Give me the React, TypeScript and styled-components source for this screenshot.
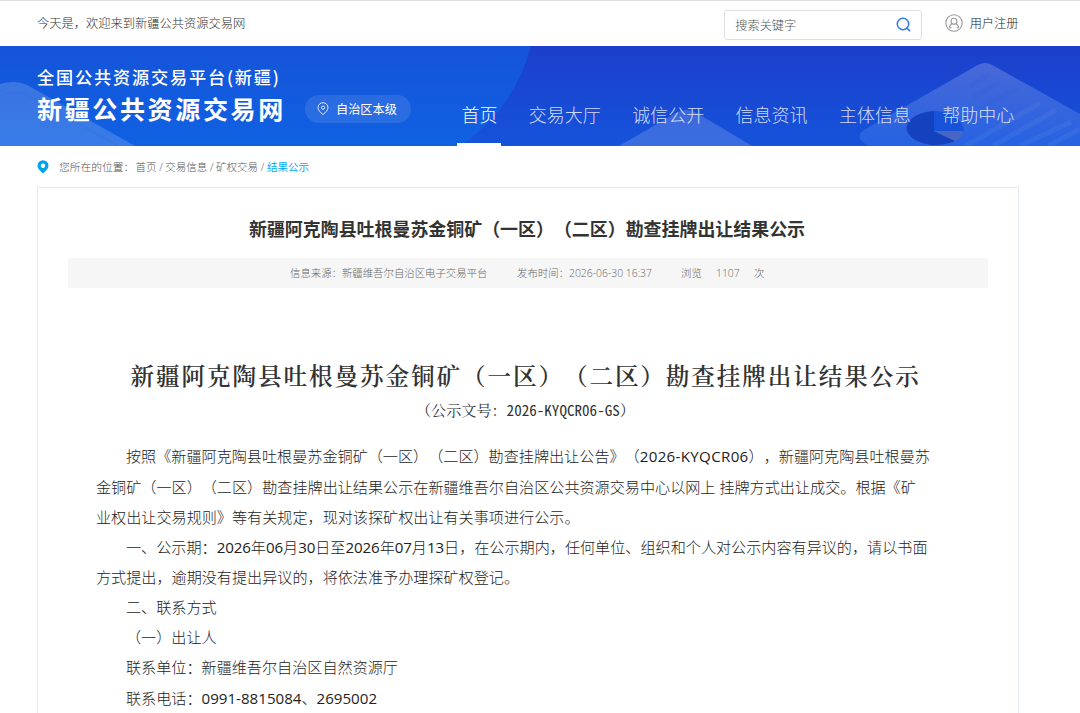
import React from "react";
import styled, { createGlobalStyle } from "styled-components";

const GlobalStyle = createGlobalStyle`
  * { box-sizing: border-box; }
  html, body { margin: 0; padding: 0; height: 713px; overflow: hidden; background: #fff; }
  body {
    font-family: "Open Sans", "Noto Sans CJK SC", sans-serif;
    color: #333;
    text-spacing-trim: space-all;
    white-space: nowrap;
  }
`;

const Page = styled.div`
  width: 1080px;
  height: 713px;
  overflow: hidden;
  display: flex;
  flex-direction: column;
`;

const Container = styled.div`
  width: 982px;
  margin-left: 37px;
  display: flex;
  align-items: center;
`;

const TopBar = styled.div`
  height: 46px;
  flex: none;
  border-top: 1px solid #e0e0e0;
  display: flex;
  align-items: center;
`;

const Greeting = styled.span`
  flex: 1;
  font-size: 12.25px;
  line-height: 18px;
  padding-top: 1px;
  font-weight: 300;
  color: #333;
`;

const SearchBox = styled.div`
  width: 198px;
  height: 30px;
  margin-top: 2px;
  border: 1px solid #dedede;
  border-radius: 3px;
  display: flex;
  align-items: center;
  justify-content: space-between;
  padding: 0 10px;
  font-size: 12.2px;
  font-weight: 300;
  color: #555;
`;

const Register = styled.a`
  display: flex;
  align-items: center;
  gap: 7px;
  margin: 0 0.6px 1px 22.4px;
  font-size: 12.2px;
  font-weight: 300;
  color: #222;
`;

const Header = styled.header`
  position: relative;
  height: 100px;
  flex: none;
  overflow: hidden;
  color: #fff;
`;

const HeaderArt = styled.svg`
  position: absolute;
  inset: 0;
`;

const HeaderRow = styled(Container)`
  position: relative;
  height: 100px;
  align-items: flex-start;
`;

const Brand = styled.div`
  width: 268px;
  padding-top: 19px;
  font-family: "Noto Sans CJK SC", sans-serif;
`;

const BrandSmall = styled.div`
  font-size: 17.2px;
  line-height: 24px;
  font-weight: 500;
  letter-spacing: 1.8px;
`;

const BrandLarge = styled.div`
  font-size: 25px;
  line-height: 38px;
  font-weight: 700;
  letter-spacing: 2.65px;
`;

const Region = styled.div`
  display: flex;
  align-items: center;
  gap: 7px;
  width: 106px;
  height: 28px;
  margin-top: 49px;
  padding-left: 12px;
  border-radius: 14px;
  background: rgba(255, 255, 255, 0.1);
  font-size: 12.2px;
`;

const Nav = styled.nav`
  display: flex;
  gap: 23.4px;
  margin-left: 46.4px;
  padding-top: 42px;
`;

const NavItem = styled.a<{ $active?: boolean }>`
  height: 58px;
  padding: 12px 4px 0;
  font-size: 18px;
  line-height: 30px;
  font-weight: 300;
  color: ${(p) => (p.$active ? "#fff" : "rgba(255,255,255,0.8)")};
  border-bottom: 3px solid ${(p) => (p.$active ? "#fff" : "transparent")};
`;

const Breadcrumb = styled(Container)`
  height: 41px;
  flex: none;
  font-size: 10.4px;
  font-weight: 300;
  color: #555;
`;

const CrumbLabel = styled.span`
  margin: 0 13.5px 0 10px;
  font-size: 10.75px;
  width: 63px;
`;

const Crumb = styled.span<{ $current?: boolean }>`
  font-size: 10.5px;
  font-weight: ${(p) => (p.$current ? 400 : 300)};
  color: ${(p) => (p.$current ? "#00a8ee" : "inherit")};
`;

const Slash = styled.span`
  width: 8.8px;
  text-align: center;
`;

const Card = styled.main`
  width: 982px;
  height: 560px;
  flex: none;
  margin-left: 37px;
  border: 1px solid #e2eaf5;
  padding: 0 30px;
  display: flex;
  flex-direction: column;
`;

const Title = styled.h1`
  margin: 26px 0 15px;
  font-family: "Noto Sans CJK SC", sans-serif;
  font-size: 17.95px;
  line-height: 29px;
  font-weight: 700;
  text-align: center;
  padding-right: 2px;
`;

const Meta = styled.div`
  height: 30px;
  background: #f6f6f6;
  display: flex;
  align-items: center;
  padding-left: 222px;
  padding-bottom: 1px;
  font-size: 10.4px;
  font-weight: 300;
  color: #666;
`;

const MetaItem = styled.span<{ $width: number }>`
  width: ${(p) => p.$width}px;
`;

const Article = styled.article`
  padding: 69px 0 0 28px;
`;

const DocTitle = styled.h2`
  margin: 0 0 0 34.5px;
  font-family: "Noto Serif CJK SC", "Noto Sans CJK SC", serif;
  font-size: 23.6px;
  line-height: 37px;
  font-weight: 600;
  letter-spacing: 1.9px;
`;

const DocNumber = styled.p`
  margin: 0 0 16.4px 320px;
  font-family: "Noto Serif CJK SC", "Noto Sans CJK SC", serif;
  font-size: 15.1px;
  line-height: 30px;
  font-weight: 400;
`;

const HalfWidth = styled.span`
  font-family: "Noto Sans CJK SC", sans-serif;
  font-feature-settings: "hwid";
  font-weight: 400;
`;

const Line = styled.p<{ $indent?: boolean }>`
  margin: 0;
  padding-left: ${(p) => (p.$indent ? 30 : 0)}px;
  font-size: 15.12px;
  line-height: 30.15px;
  font-weight: 300;
  color: #1c1c1c;
`;

const Latin = styled.span<{ $spacing?: number }>`
  font-weight: 500;
  color: #222;
  letter-spacing: ${(p) => p.$spacing ?? 0}px;
`;

const SearchIcon = () => (
  <svg width="15" height="15" viewBox="0 0 15 15" fill="none" stroke="#2f7ae5" strokeWidth="1.5">
    <circle cx="7" cy="7" r="5.7" />
    <path d="M11 11l2.6 2.6" strokeLinecap="round" />
  </svg>
);

const UserIcon = () => (
  <svg width="18" height="18" viewBox="0 0 18 18" fill="none" stroke="#999" strokeWidth="1.1">
    <circle cx="9" cy="9" r="8.2" />
    <circle cx="9" cy="7.3" r="3" />
    <path d="M4.500 13.800c0-2.200 1.200-3.500 2.800-4.100M13.500 13.800c0-2.200-1.200-3.500-2.800-4.100M4.500 13.700h2M11.500 13.700h2" />
  </svg>
);

const RegionIcon = () => (
  <svg width="12" height="14" viewBox="0 0 12 14" fill="none" stroke="#fff" strokeWidth="1" opacity="0.85">
    <path d="M6 12.600C3.500 10.400 1 8.200 1 5.700a5 5 0 0 1 10 0C11 8.200 8.500 10.400 6 12.600z" />
    <circle cx="6" cy="5.700" r="1.600" />
  </svg>
);

const PinIcon = () => (
  <svg width="12" height="14" viewBox="0 0 12 14">
    <path
      fillRule="evenodd"
      fill="#00a3ec"
      d="M6 13.500C3 10.800.5 8.500.5 5.700a5.500 5.500 0 0 1 11 0C11.500 8.500 9 10.800 6 13.500zM6 3.500a2.200 2.200 0 1 0 0 4.400 2.200 2.200 0 0 0 0-4.400z"
    />
  </svg>
);

const Art = () => (
  <HeaderArt width="1080" height="100" viewBox="0 0 1080 100">
    <defs>
      <linearGradient id="deep" x1="0" y1="0" x2="0" y2="1">
        <stop offset="0" stopColor="#1c3fcb" />
        <stop offset="1" stopColor="#1553db" />
      </linearGradient>
      <linearGradient id="bright" x1="0" y1="0" x2="0" y2="1">
        <stop offset="0" stopColor="#1554d8" />
        <stop offset="1" stopColor="#1061e3" />
      </linearGradient>
      <linearGradient id="sheet" x1="0" y1="0" x2="0" y2="1">
        <stop offset="0" stopColor="#fff" stopOpacity="0.2" />
        <stop offset="1" stopColor="#6aa0ff" stopOpacity="0.2" />
      </linearGradient>
    </defs>
    <rect width="1080" height="100" fill="url(#deep)" />
    <path d="M0 0H531Q515 61 461 100H0z" fill="url(#bright)" />
    <path d="M0 38Q16 33 29 40L135 100H0z" fill="#fff" opacity="0.17" />
    <path d="M0 50Q16 43 29 50L118 100" fill="none" stroke="#1554d8" strokeOpacity="0.12" />
    <path d="M619 100L676 67Q686 61 697 67L752 100z" fill="#fff" opacity="0.16" />
    <path d="M869 100Q853 92 864 84L976 20Q985 14 994 20L1080 68V100z" fill="url(#sheet)" />
    <g stroke="#fff" strokeOpacity="0.05" strokeWidth="5">
      <path d="M966 100L1040 57M993 100L1056 64M1020 100L1071 76M1048 100L1080 83" />
    </g>
    <g stroke="#1c3fcb" strokeOpacity="0.06" strokeWidth="5">
      <path d="M970 40L990 28M974 51L1000 36M986 58L1017 43" />
    </g>
    <path d="M934 65A29.500 17 0 1 0 955 95L934 85z" fill="#1441bd" />
    <path d="M934 65Q961 66 964 85H934z" fill="#1753d8" />
    <path d="M934 85H963Q962 92 955 95z" fill="#4966c4" />
  </HeaderArt>
);

const navItems = ["首页", "交易大厅", "诚信公开", "信息资讯", "主体信息", "帮助中心"];

export default function App() {
  return (
    <Page>
      <GlobalStyle />
      <TopBar>
        <Container>
          <Greeting>今天是，欢迎来到新疆公共资源交易网</Greeting>
          <SearchBox>
            搜索关键字
            <SearchIcon />
          </SearchBox>
          <Register>
            <UserIcon />
            用户注册
          </Register>
        </Container>
      </TopBar>
      <Header>
        <Art />
        <HeaderRow>
          <Brand>
            <BrandSmall>全国公共资源交易平台(新疆)</BrandSmall>
            <BrandLarge>新疆公共资源交易网</BrandLarge>
          </Brand>
          <Region>
            <RegionIcon />
            自治区本级
          </Region>
          <Nav>
            {navItems.map((item, i) => (
              <NavItem key={item} $active={i === 0}>
                {item}
              </NavItem>
            ))}
          </Nav>
        </HeaderRow>
      </Header>
      <Breadcrumb>
        <PinIcon />
        <CrumbLabel>您所在的位置：</CrumbLabel>
        <Crumb>首页</Crumb>
        <Slash>/</Slash>
        <Crumb>交易信息</Crumb>
        <Slash>/</Slash>
        <Crumb>矿权交易</Crumb>
        <Slash>/</Slash>
        <Crumb $current>结果公示</Crumb>
      </Breadcrumb>
      <Card>
        <Title>新疆阿克陶县吐根曼苏金铜矿（一区）（二区）勘查挂牌出让结果公示</Title>
        <Meta>
          <MetaItem $width={227}>信息来源：新疆维吾尔自治区电子交易平台</MetaItem>
          <MetaItem $width={164}>发布时间：2026-06-30 16:37</MetaItem>
          <MetaItem $width={35}>浏览</MetaItem>
          <MetaItem $width={38}>1107</MetaItem>
          <MetaItem $width={12}>次</MetaItem>
        </Meta>
        <Article>
          <DocTitle>新疆阿克陶县吐根曼苏金铜矿（一区）（二区）勘查挂牌出让结果公示</DocTitle>
          <DocNumber>
            （公示文号：<HalfWidth>2026-KYQCR06-GS</HalfWidth>）
          </DocNumber>
          <Line $indent>
            按照《新疆阿克陶县吐根曼苏金铜矿（一区）（二区）勘查挂牌出让公告》（<Latin $spacing={0.32}>2026-KYQCR06</Latin>），新疆阿克陶县吐根曼苏
          </Line>
          <Line>金铜矿（一区）（二区）勘查挂牌出让结果公示在新疆维吾尔自治区公共资源交易中心以网上 挂牌方式出让成交。根据《矿</Line>
          <Line>业权出让交易规则》等有关规定，现对该探矿权出让有关事项进行公示。</Line>
          <Line $indent>
            一、公示期：<Latin $spacing={-0.1}>2026</Latin>年<Latin $spacing={-0.1}>06</Latin>月<Latin $spacing={-0.1}>30</Latin>日至
            <Latin $spacing={-0.1}>2026</Latin>年<Latin $spacing={-0.1}>07</Latin>月<Latin $spacing={-0.1}>13</Latin>
            日，在公示期内，任何单位、组织和个人对公示内容有异议的，请以书面
          </Line>
          <Line>方式提出，逾期没有提出异议的，将依法准予办理探矿权登记。</Line>
          <Line $indent>二、联系方式</Line>
          <Line $indent>（一）出让人</Line>
          <Line $indent>联系单位：新疆维吾尔自治区自然资源厅</Line>
          <Line $indent>
            联系电话：<Latin>0991-8815084</Latin>、<Latin>2695002</Latin>
          </Line>
        </Article>
      </Card>
    </Page>
  );
}
